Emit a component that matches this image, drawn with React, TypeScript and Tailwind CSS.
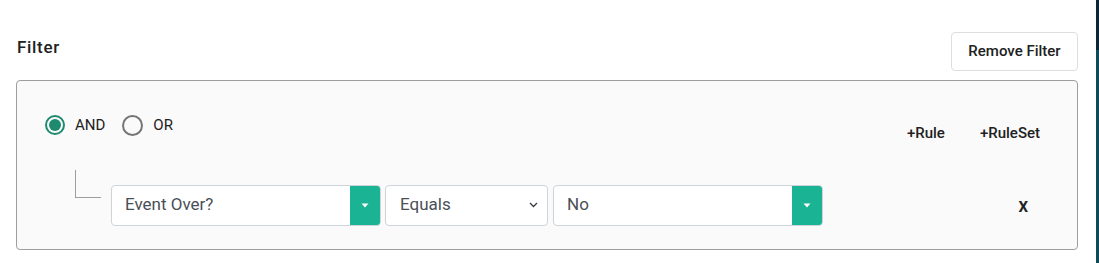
import React from "react";

function Caret() {
  return (
    <svg width="8" height="5" viewBox="0 0 8 5">
      <path d="M0.5 0.5 L7.5 0.5 L4 4.5 Z" fill="#ffffff" />
    </svg>
  );
}

function GreenSelect({ value, width }: { value: string; width: string }) {
  return (
    <div className={`flex h-[41px] ${width} rounded-[4px] border border-[#ced4da] bg-white overflow-hidden`}>
      <div className="flex-1 flex items-center pl-[13px] text-[17px] text-[#495057]">{value}</div>
      <div className="w-[30px] h-full bg-[#1ab394] flex items-center justify-center">
        <Caret />
      </div>
    </div>
  );
}

export default function App() {
  return (
    <div className="flex w-[1099px] h-[263px] bg-white" style={{ fontFamily: "Roboto, 'Liberation Sans', sans-serif" }}>
      <div className="flex-1 pl-[16px] pr-[18px]">
        <div className="flex justify-between items-start pt-[32px]">
          <div className="pl-[1px] pt-[3px] text-[17px] font-medium tracking-[0.04em] text-[#212121]">Filter</div>
          <button className="h-[39px] w-[127px] rounded-[4px] border border-[#dedede] bg-white text-[15px] font-medium text-[#212121]">
            Remove Filter
          </button>
        </div>
        <div className="mt-[9px] h-[170px] rounded-[4px] border border-[#9e9e9e] bg-[#fafafa] pl-[28px] pr-[37px]">
          <div className="flex justify-between items-start pt-[33px]">
            <div className="flex items-center text-[15px] text-[#212121]">
              <span className="w-[20px] h-[20px] rounded-full border-2 border-[#1e8a70] flex items-center justify-center">
                <span className="w-[12px] h-[12px] rounded-full bg-[#1e8a70]" />
              </span>
              <span className="ml-[10px]">AND</span>
              <span className="ml-[17px] w-[21px] h-[21px] rounded-full border-2 border-[#757575]" />
              <span className="ml-[10px]">OR</span>
            </div>
            <div className="flex items-center gap-[35px] mt-[8px] text-[15px] font-medium text-[#212121]">
              <span>+Rule</span>
              <span>+RuleSet</span>
            </div>
          </div>
          <div className="flex items-start mt-[25px]">
            <div className="ml-[30px] w-[26px] h-[28px] border-l border-b border-[#9e9e9e]" />
            <div className="ml-[10px] mt-[15px] flex gap-[4px]">
              <GreenSelect value="Event Over?" width="w-[270px]" />
              <div className="flex items-center h-[41px] w-[163px] rounded-[4px] border border-[#ced4da] bg-white pl-[14px] pr-[9px] text-[17px] text-[#495057]">
                <span className="flex-1">Equals</span>
                <svg width="9" height="6" viewBox="0 0 9 6">
                  <path d="M1 1 L4.5 4.5 L8 1" fill="none" stroke="#343a40" strokeWidth="1.3" />
                </svg>
              </div>
              <div className="ml-[1px]">
                <GreenSelect value="No" width="w-[270px]" />
              </div>
            </div>
            <div className="ml-auto mr-[12px] mt-[26px] text-[15px] font-bold text-[#212121]">X</div>
          </div>
        </div>
      </div>
      <div className="w-[3px] h-full flex flex-col">
        <div className="h-[50px] bg-[#0b2636]" />
        <div className="flex-1 bg-[#0e4a5c]" />
      </div>
    </div>
  );
}
